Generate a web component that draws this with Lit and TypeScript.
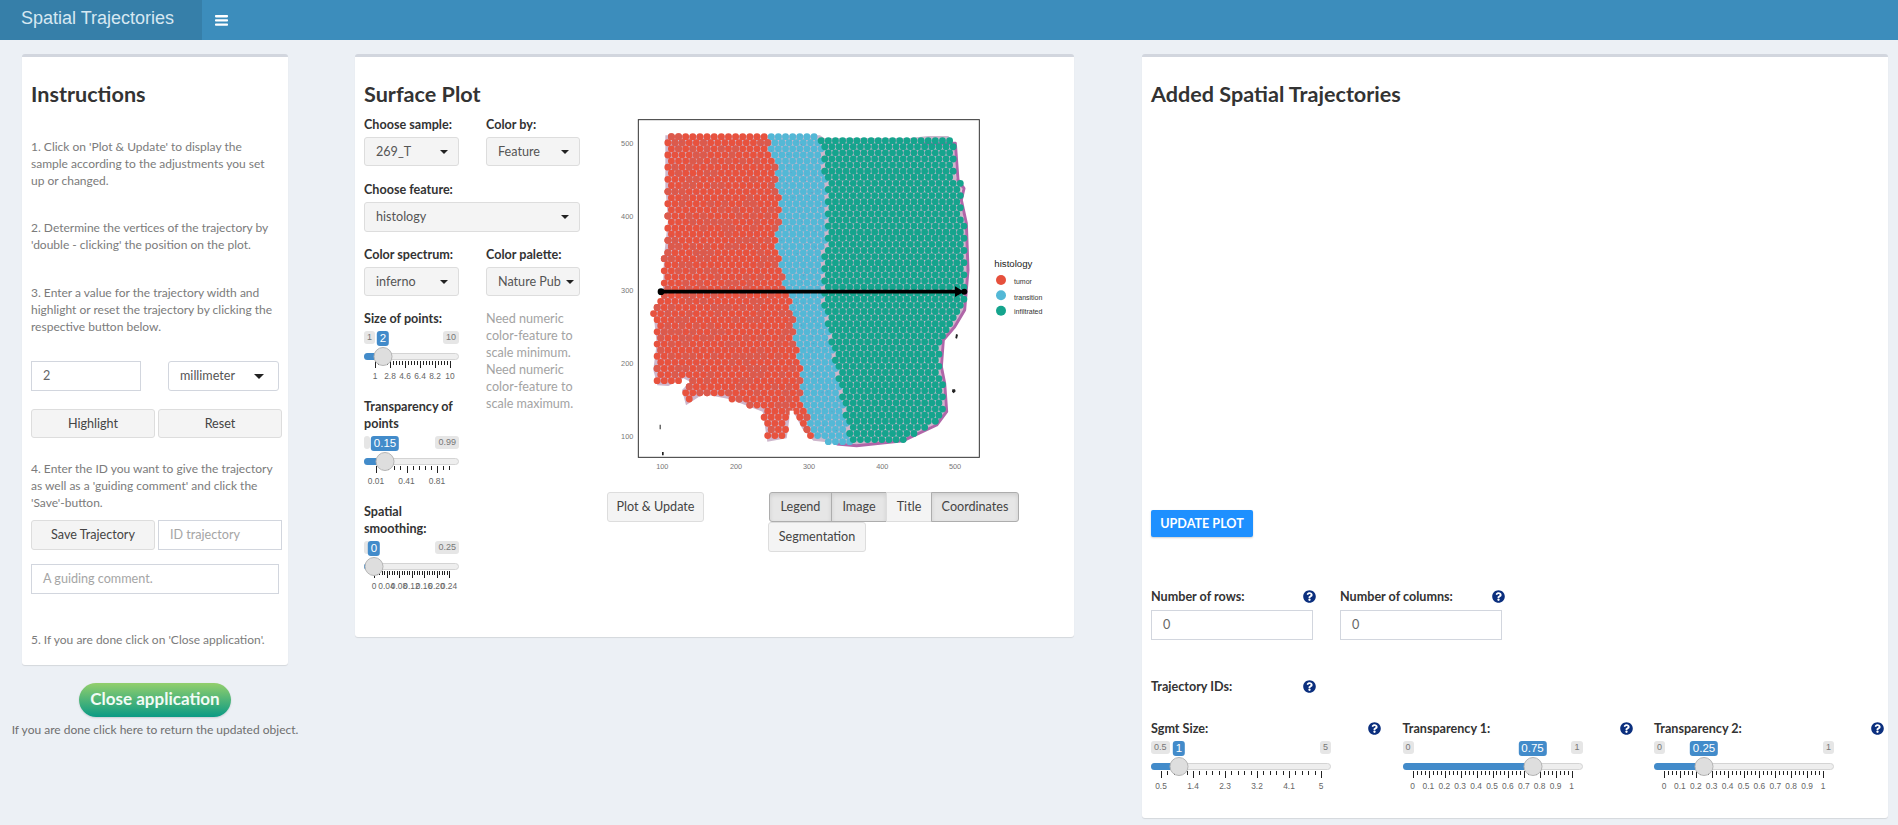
import { LitElement, html, css, svg } from "lit";
import { customElement, property } from "lit/decorators.js";

type Pt = [number, number];
const OUTLINE: Pt[] = [[136,76],[600,76],[612,84],[870,84],[925,78],[985,78],[1003,100],[1008,205],[1028,222],[1020,270],[1035,340],[1042,480],[1032,600],[1000,650],[966,690],[960,770],[970,820],[976,905],[948,942],[850,990],[710,1006],[650,1000],[580,992],[548,958],[525,915],[512,900],[500,985],[442,995],[428,905],[330,868],[250,852],[198,886],[186,840],[210,815],[190,805],[145,828],[112,826],[100,780],[110,700],[100,606],[128,560],[132,440],[144,330],[136,230]];
const RIGHT_RIM: Pt[] = [[905,98],[915,102],[1006,100],[1014,210],[1032,235],[1024,270],[1039,340],[1044,480],[1034,600],[1004,650],[970,690],[964,770],[974,820],[980,905],[950,945],[850,992],[710,1007],[650,1002]];
const LEFT: Pt[] = [[70,442],[150,462],[300,480],[400,470],[500,492],[600,515],[700,530],[800,545],[900,552],[990,590]];
const RIGHT: Pt[] = [[70,600],[200,618],[400,615],[500,612],[600,612],[700,635],[800,655],[900,672],[990,690]];

function inside(x: number, y: number) {
  let c = false;
  for (let i = 0, j = OUTLINE.length - 1; i < OUTLINE.length; j = i++) {
    const [xi, yi] = OUTLINE[i];
    const [xj, yj] = OUTLINE[j];
    if (yi > y !== yj > y && x < ((xj - xi) * (y - yi)) / (yj - yi) + xi) c = !c;
  }
  return c;
}
function edge(line: Pt[], y: number) {
  for (let i = 1; i < line.length; i++) {
    if (y <= line[i][0]) {
      const [a, b] = line[i - 1];
      const [c, d] = line[i];
      return b + ((d - b) * (y - a)) / (c - a);
    }
  }
  return line[line.length - 1][1];
}
function buildSpots() {
  const out = ["", "", ""];
  let specks = "";
  let dark = "";
  let seed = 7;
  const rnd = () => ((seed = (seed * 16807) % 2147483647) / 2147483647);
  let r = 0;
  for (let y0 = 80; y0 < 1002; y0 += 18.3, r++) {
    for (let x = 90 + (r % 2) * 10.7; x < 1050; x += 21.4) {
      const k = x < edge(LEFT, y0) ? 0 : x < edge(RIGHT, y0) ? 1 : 2;
      const y = k === 2 ? y0 + 12 : y0;
      if (!inside(x, y)) continue;
      const at = `M${x.toFixed(1)} ${y.toFixed(1)}h.01`;
      out[k] += at;
      if (k === 0 && rnd() < 0.3) dark += at;
      if (k < 2 && rnd() < (k === 0 ? 0.9 : 0.5)) {
        specks += `M${(x + rnd() * 16 - 8).toFixed(1)} ${(y + rnd() * 14 - 7).toFixed(1)}l${(rnd() * 6 - 3).toFixed(1)} ${(rnd() * 6 - 3).toFixed(1)}`;
      }
    }
  }
  return { out, specks, dark };
}
const SPOTS = buildSpots();
const TISSUE = OUTLINE.map((p) => p.join(",")).join(" ");
const RIM = RIGHT_RIM.map((p) => p.join(",")).join(" ");

const HELP = html`<svg class="help" viewBox="0 0 512 512"><path fill="#0b2f7e" d="M504 256c0 136.997-111.043 248-248 248S8 392.997 8 256C8 119.083 119.043 8 256 8s248 111.083 248 248zM262.655 90c-54.497 0-89.255 22.957-116.549 63.758-3.536 5.286-2.353 12.415 2.715 16.258l34.699 26.31c5.205 3.947 12.621 3.008 16.665-2.122 17.864-22.658 30.113-35.797 57.303-35.797 20.429 0 45.698 13.148 45.698 32.958 0 14.976-12.363 22.667-32.534 33.976C247.128 238.528 216 254.941 216 296v4c0 6.627 5.373 12 12 12h56c6.627 0 12-5.373 12-12v-1.333c0-28.462 83.186-29.647 83.186-106.667 0-58.002-60.165-102-116.531-102zM256 338c-25.365 0-46 20.635-46 46 0 25.364 20.635 46 46 46s46-20.636 46-46c0-25.365-20.635-46-46-46z"/></svg>`;

@customElement("app-slider")
class AppSlider extends LitElement {
  @property({ type: Number }) w = 95;
  @property() min = "";
  @property() max = "";
  @property() value = "";
  @property({ type: Number }) pos = 10;
  @property({ type: Number }) g0 = 10;
  @property({ type: Number }) step = 15;
  @property({ type: Number }) minor = 5;
  @property({ type: Number }) count = 6;
  @property({ type: Number }) end = 0;
  @property({ attribute: false }) labels: string[] = [];

  static styles = css`
    :host { display: block; position: relative; height: 52px; font-family: "Liberation Sans", sans-serif; }
    .b { position: absolute; top: 0; height: 13px; line-height: 13px; padding: 0 3px; font-size: 9px; border-radius: 3px; background: #e6e6e6; color: #777; white-space: nowrap; }
    .mn { left: 0; }
    .mx { right: 0; }
    .val { background: #428bca; color: #fff; font-size: 11.5px; height: 15px; line-height: 15px; transform: translateX(-50%); }
    .track { position: absolute; left: 0; right: 0; top: 22px; height: 7px; box-sizing: border-box; background: #eee; border: 1px solid #d4d4d4; border-radius: 4px; }
    .bar { position: absolute; left: 0; top: 22px; height: 7px; background: #428bca; border-radius: 4px 0 0 4px; }
    .handle { position: absolute; top: 16px; width: 19px; height: 19px; box-sizing: border-box; background: #dedede; border: 1px solid #b5b5b5; border-radius: 50%; transform: translateX(-50%); }
    svg { position: absolute; left: 0; top: 30px; overflow: visible; }
    .t { position: absolute; top: 39px; font-size: 8.4px; line-height: 12px; color: #666; transform: translateX(-50%); white-space: nowrap; }
  `;

  render() {
    const ticks: string[] = [];
    const stop = this.end || this.g0 + this.step * (this.count - 1);
    const ms = this.step / this.minor;
    for (let i = 0; this.g0 + i * ms <= stop + 0.01; i++) {
      const x = Math.round(this.g0 + i * ms) + 0.5;
      ticks.push(`M${x} 0v${i % this.minor === 0 ? 7 : 4}`);
    }
    return html`
      <div class="b mn">${this.min}</div>
      <div class="b mx">${this.max}</div>
      <div class="b val" style="left:${this.pos}px">${this.value}</div>
      <div class="track"></div>
      <div class="bar" style="width:${this.pos}px"></div>
      <svg width=${this.w} height="8"><path d=${ticks.join("")} stroke="#222" stroke-width="1" fill="none"/></svg>
      <div class="handle" style="left:${this.pos}px"></div>
      ${this.labels.map((l, i) => html`<div class="t" style="left:${this.g0 + i * this.step}px">${l}</div>`)}
    `;
  }
}

@customElement("app-root")
export class AppRoot extends LitElement {
  static styles = css`
    :host { display: block; min-height: 825px; background: #ecf0f5; font-family: "Lato", "Liberation Sans", sans-serif; font-size: 12.6px; color: #333; }
    * { box-sizing: border-box; }
    .nav { display: flex; align-items: center; height: 40px; background: #3c8dbc; }
    .logo { width: 202px; height: 40px; line-height: 37px; background: #367fa9; color: #d6e8f2; font-family: "Liberation Sans", sans-serif; font-size: 18px; padding-left: 21px; }
    .burger { margin-left: 13px; display: block; }
    .main { display: flex; align-items: flex-start; padding: 14px 0 0 22px; }
    .left { width: 266px; display: flex; flex-direction: column; align-items: center; }
    .box { background: #fff; border-top: 3px solid #d2d6de; border-radius: 3px; box-shadow: 0 1px 1px rgba(0,0,0,.1); }
    .box1 { width: 266px; padding: 0 6px 17px 9px; align-self: stretch; }
    .box2 { width: 719px; height: 583px; margin-left: 67px; padding: 0 9px; }
    .box3 { width: 746px; margin-left: 68px; padding: 0 9px 25px; }
    h2 { margin: 25px 0 0; font-size: 21.6px; line-height: 24px; font-weight: 700; color: #333; }
    p { margin: 0; line-height: 17px; color: #7b7b7b; white-space: nowrap; }
    .instr { font-size: 12px; }
    .p1 { margin-top: 32px; }
    .p2 { margin-top: 30px; }
    .p3 { margin-top: 31px; }
    .row { display: flex; }
    .r1 { margin-top: 26px; gap: 27px; }
    .r2 { margin-top: 18px; gap: 3px; }
    .r3 { margin-top: 9px; gap: 3px; }
    .p4 { margin-top: 22px; }
    .p5 { margin-top: 37px; }
    .input { height: 30px; border: 1px solid #d2d6de; line-height: 28px; padding-left: 11px; color: #666; background: #fff; }
    .ph { color: #a5a5a5; }
    .w110 { width: 110px; }
    .w124 { width: 124px; }
    .w248 { width: 248px; margin-top: 14px; }
    .w162 { width: 162px; }
    .btn { height: 29px; line-height: 27px; background: #f4f4f4; border: 1px solid #ddd; border-radius: 3px; color: #444; text-align: center; }
    .h30 { height: 30px; line-height: 28px; }
    .sel { position: relative; display: block; height: 29px; line-height: 27px; background: #f4f4f4; border: 1px solid #ddd; border-radius: 3px; color: #555; padding-left: 11px; }
    .sel::after { content: ""; position: absolute; right: 10px; top: 12px; border: 4px solid transparent; border-top-color: #222; border-bottom-width: 0; }
    .sel.tight::after { right: 5px; }
    .sel.unit { width: 111px; height: 30px; line-height: 28px; background: #fff; border-color: #d2d6de; }
    .sel.unit::after { right: 14px; top: 12px; border-width: 5px 5px 0; }
    .close { margin-top: 18px; width: 152px; height: 34px; line-height: 32px; border-radius: 17px; background: linear-gradient(#93cf6c, #0a9a84); color: #f2fbf5; font-weight: 700; font-size: 17px; text-align: center; box-shadow: 0 1px 2px rgba(0,0,0,.15); }
    .hint { margin-top: 4px; line-height: 17px; color: #6f6f6f; white-space: nowrap; font-size: 12px; }
    .body2 { display: flex; gap: 27px; margin-top: 4px; }
    .form { width: 216px; padding-top: 6px; }
    label { display: block; font-weight: 700; line-height: 17px; color: #333; white-space: nowrap; font-size: 12.6px; }
    .two { display: grid; grid-template-columns: 95px 94px; column-gap: 27px; }
    .mt4 { margin-top: 4px; }
    .g15 { margin-top: 15px; }
    .g14 { margin-top: 14px; }
    .sel.wide { height: 30px; line-height: 28px; }
    .notes { margin-top: 14px; }
    .notes p { color: #a3a3a3; }
    .s1 { margin-top: 4px; }
    .plot { display: block; margin-left: 13px; font-family: "Liberation Sans", sans-serif; }
    .actions { display: flex; margin-top: 22px; }
    .plotbtn { width: 97px; height: 30px; line-height: 28px; margin-right: 65px; }
    .group { display: flex; flex-wrap: wrap; width: 262px; }
    .group .btn { height: 30px; line-height: 28px; border-radius: 0; margin-right: -1px; }
    .on { background: #e6e6e6 !important; border-color: #adadad !important; box-shadow: inset 0 2px 4px rgba(0,0,0,.1); }
    .b1 { width: 63px; border-radius: 3px 0 0 3px !important; }
    .b2 { width: 56px; }
    .b3 { width: 46px; }
    .b4 { width: 88px; border-radius: 0 3px 3px 0 !important; }
    .b5 { width: 98px; margin-left: -1px; border-radius: 3px !important; }
    .update { display: block; margin-top: 404px; width: 102px; height: 27px; line-height: 27px; text-align: center; background: #1e90ff; color: #fff; font-weight: 700; font-size: 12.6px; border-radius: 2px; box-shadow: 0 1px 2px rgba(0,0,0,.2); }
    .nums { display: flex; gap: 24px; margin-top: 51px; }
    .num { width: 165px; }
    .lab { display: flex; justify-content: space-between; align-items: center; }
    .mt5 { margin-top: 5px; }
    .help { display: block; width: 13px; height: 13px; flex: none; }
    .ids { width: 165px; margin-top: 38px; }
    .sliders { display: grid; grid-template-columns: repeat(3, 230px); column-gap: 21.5px; margin-top: 25px; }
    .sliders app-slider { width: 180px; margin-top: 4px; }
  `;

  private dots() {
    const colors = ["#e8523e", "#53b8d6", "#15a48d"];
    return svg`
      <polygon points=${TISSUE} fill="#cdb6cb"/>
      <polyline points=${RIM} fill="none" stroke="#b066a8" stroke-width="9" stroke-linejoin="round"/>
      ${SPOTS.out.map((d, i) => svg`<path d=${d} stroke=${colors[i]} stroke-width="20.6" stroke-linecap="round" fill="none"/>`)}
      <path d=${SPOTS.dark} stroke="#dc5a4c" stroke-width="20.6" stroke-linecap="round" fill="none"/>
      <path d=${SPOTS.specks} stroke="#8a5aa0" stroke-width="2.2" opacity=".55" fill="none"/>
      <rect x="509" y="902" width="12" height="56" fill="#fff"/>
    `;
  }

  private plot() {
    const ys: [string, number][] = [["500", 100], ["400", 320], ["300", 540], ["200", 760], ["100", 978]];
    const xs: [string, number][] = [["100", 127], ["200", 348], ["300", 567], ["400", 787], ["500", 1005]];
    return html`<svg class="plot" width="440" height="360" viewBox="0 0 1320 1080">
      ${this.dots()}
      <path d="M123 545H1020" stroke="#000" stroke-width="11"/>
      <circle cx="123" cy="545" r="10"/>
      <path d="M1005 529l27 16-27 16z"/>
      <circle cx="1033" cy="545" r="9"/>
      <path d="M1008 672l6 2-3 12-5-2zM997 838h8l2 6-6 6-5-5zM119 944h3v14h-3zM126 1026h5v10h-5z" fill="#222"/>
      <rect x="55" y="29" width="1023" height="1013" fill="none" stroke="#333" stroke-width="3"/>
      ${ys.map(([t, y]) => svg`<text x="40" y=${y + 8} text-anchor="end" font-size="22" fill="#777">${t}</text>`)}
      ${xs.map(([t, x]) => svg`<text x=${x} y="1076" text-anchor="middle" font-size="22" fill="#777">${t}</text>`)}
      <text x="1123" y="471" font-size="29" fill="#222">histology</text>
      <circle cx="1143" cy="510" r="15" fill="#e6503c"/>
      <circle cx="1143" cy="556" r="15" fill="#53b8d6"/>
      <circle cx="1143" cy="602" r="15" fill="#15a48d"/>
      <text x="1182" y="523" font-size="21" fill="#333">tumor</text>
      <text x="1182" y="569" font-size="21" fill="#333">transition</text>
      <text x="1182" y="613" font-size="21" fill="#333">infiltrated</text>
    </svg>`;
  }

  render() {
    return html`
      <div class="nav">
        <div class="logo">Spatial Trajectories</div>
        <svg class="burger" width="13" height="11" viewBox="0 0 13 11"><g fill="#fff"><rect width="13" height="2.4" rx=".8"/><rect y="4.2" width="13" height="2.4" rx=".8"/><rect y="8.4" width="13" height="2.4" rx=".8"/></g></svg>
      </div>
      <div class="main">
        <div class="left">
          <div class="box box1">
            <h2>Instructions</h2>
            <p class="instr p1">1. Click on 'Plot &amp; Update' to display the<br>sample according to the adjustments you set<br>up or changed.</p>
            <p class="instr p2">2. Determine the vertices of the trajectory by<br>'double - clicking' the position on the plot.</p>
            <p class="instr p3">3. Enter a value for the trajectory width and<br>highlight or reset the trajectory by clicking the<br>respective button below.</p>
            <div class="row r1"><div class="input w110">2</div><div class="sel unit">millimeter</div></div>
            <div class="row r2"><div class="btn w124">Highlight</div><div class="btn w124">Reset</div></div>
            <p class="instr p4">4. Enter the ID you want to give the trajectory<br>as well as a 'guiding comment' and click the<br>'Save'-button.</p>
            <div class="row r3"><div class="btn w124 h30">Save Trajectory</div><div class="input w124 ph">ID trajectory</div></div>
            <div class="input w248 ph">A guiding comment.</div>
            <p class="instr p5">5. If you are done click on 'Close application'.</p>
          </div>
          <div class="close">Close application</div>
          <div class="hint">If you are done click here to return the updated object.</div>
        </div>

        <div class="box box2">
          <h2>Surface Plot</h2>
          <div class="body2">
            <div class="form">
              <div class="two">
                <div><label>Choose sample:</label><div class="sel mt4">269_T</div></div>
                <div><label>Color by:</label><div class="sel mt4">Feature</div></div>
              </div>
              <label class="g15">Choose feature:</label>
              <div class="sel wide mt4">histology</div>
              <div class="two g14">
                <div><label>Color spectrum:</label><div class="sel mt4">inferno</div></div>
                <div><label>Color palette:</label><div class="sel mt4 tight">Nature Pub</div></div>
              </div>
              <div class="two">
                <div>
                  <label class="g14">Size of points:</label>
                  <app-slider class="s1" min="1" max="10" value="2" .w=${95} .pos=${19} .g0=${11} .step=${15} .count=${6} .labels=${["1", "2.8", "4.6", "6.4", "8.2", "10"]}></app-slider>
                  <label class="g15">Transparency of<br>points</label>
                  <app-slider class="s1" min="" max="0.99" value="0.15" .w=${95} .pos=${21} .g0=${12} .step=${30.5} .count=${3} .end=${86} .labels=${["0.01", "0.41", "0.81"]}></app-slider>
                  <label class="g15">Spatial<br>smoothing:</label>
                  <app-slider class="s1" min="" max="0.25" value="0" .w=${95} .pos=${10} .g0=${10} .step=${12.5} .count=${7} .end=${86} .labels=${["0", "0.04", "0.08", "0.12", "0.16", "0.20", "0.24"]}></app-slider>
                </div>
                <div class="notes"><p>Need numeric<br>color-feature to<br>scale minimum.<br>Need numeric<br>color-feature to<br>scale maximum.</p></div>
              </div>
            </div>
            <div>
              ${this.plot()}
              <div class="actions">
                <div class="btn plotbtn">Plot &amp; Update</div>
                <div class="group">
                  <div class="btn on b1">Legend</div>
                  <div class="btn on b2">Image</div>
                  <div class="btn b3">Title</div>
                  <div class="btn on b4">Coordinates</div>
                  <div class="btn b5">Segmentation</div>
                </div>
              </div>
            </div>
          </div>
        </div>

        <div class="box box3">
          <h2>Added Spatial Trajectories</h2>
          <div class="update">UPDATE PLOT</div>
          <div class="nums">
            <div class="num"><div class="lab"><label>Number of rows:</label>${HELP}</div><div class="input w162 mt5">0</div></div>
            <div class="num"><div class="lab"><label>Number of columns:</label>${HELP}</div><div class="input w162 mt5">0</div></div>
          </div>
          <div class="ids lab"><label>Trajectory IDs:</label>${HELP}</div>
          <div class="sliders">
            <div>
              <div class="lab"><label>Sgmt Size:</label>${HELP}</div>
              <app-slider min="0.5" max="5" value="1" .w=${180} .pos=${28} .g0=${10} .step=${32} .count=${6} .labels=${["0.5", "1.4", "2.3", "3.2", "4.1", "5"]}></app-slider>
            </div>
            <div>
              <div class="lab"><label>Transparency 1:</label>${HELP}</div>
              <app-slider min="0" max="1" value="0.75" .w=${180} .pos=${130} .g0=${10} .step=${15.9} .minor=${4} .count=${11} .labels=${["0", "0.1", "0.2", "0.3", "0.4", "0.5", "0.6", "0.7", "0.8", "0.9", "1"]}></app-slider>
            </div>
            <div>
              <div class="lab"><label>Transparency 2:</label>${HELP}</div>
              <app-slider min="0" max="1" value="0.25" .w=${180} .pos=${50} .g0=${10} .step=${15.9} .minor=${4} .count=${11} .labels=${["0", "0.1", "0.2", "0.3", "0.4", "0.5", "0.6", "0.7", "0.8", "0.9", "1"]}></app-slider>
            </div>
          </div>
        </div>
      </div>
    `;
  }
}
